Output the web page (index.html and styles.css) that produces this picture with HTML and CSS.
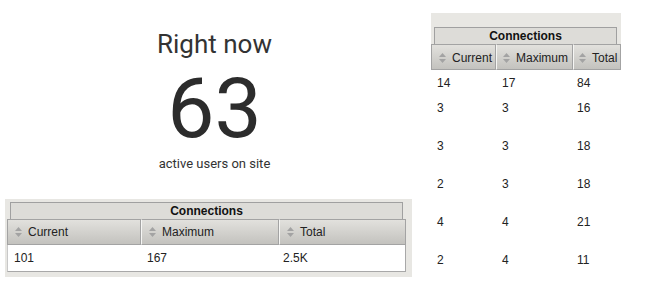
FILE: index.html
```html
<!DOCTYPE html>
<html lang="en">
  <head>
    <meta charset="utf-8" />
    <title>Realtime</title>
    <link rel="stylesheet" href="styles.css">
  </head>
  <body>
    <div class="page">
      <div class="main">
        <div class="now">
          <div class="now-title">Right now</div>
          <div class="now-count">63</div>
          <div class="now-label">active users on site</div>
        </div>
        <div class="conn-box">
          <table class="conn conn-wide">
            <caption><div class="conn-title">Connections</div></caption>
            <thead>
              <tr>
                <th><span class="sort"><svg width="7" height="10" viewBox="0 0 7 10"><path d="M0 4 3.5 0 7 4z M0 6 3.5 10 7 6z" /></svg></span>Current</th>
                <th><span class="sort"><svg width="7" height="10" viewBox="0 0 7 10"><path d="M0 4 3.5 0 7 4z M0 6 3.5 10 7 6z" /></svg></span>Maximum</th>
                <th><span class="sort"><svg width="7" height="10" viewBox="0 0 7 10"><path d="M0 4 3.5 0 7 4z M0 6 3.5 10 7 6z" /></svg></span>Total</th>
              </tr>
            </thead>
            <tbody>
              <tr><td>101</td><td>167</td><td>2.5K</td></tr>
            </tbody>
          </table>
        </div>
      </div>
      <div class="side">
        <table class="conn conn-side">
          <caption><div class="conn-title">Connections</div></caption>
          <thead>
            <tr>
              <th><span class="sort"><svg width="7" height="10" viewBox="0 0 7 10"><path d="M0 4 3.5 0 7 4z M0 6 3.5 10 7 6z" /></svg></span>Current</th>
              <th><span class="sort"><svg width="7" height="10" viewBox="0 0 7 10"><path d="M0 4 3.5 0 7 4z M0 6 3.5 10 7 6z" /></svg></span>Maximum</th>
              <th><span class="sort"><svg width="7" height="10" viewBox="0 0 7 10"><path d="M0 4 3.5 0 7 4z M0 6 3.5 10 7 6z" /></svg></span>Total</th>
            </tr>
          </thead>
          <tbody>
            <tr class="first"><td>14</td><td>17</td><td>84</td></tr>
            <tr><td>3</td><td>3</td><td>16</td></tr>
            <tr><td>3</td><td>3</td><td>18</td></tr>
            <tr><td>2</td><td>3</td><td>18</td></tr>
            <tr><td>4</td><td>4</td><td>21</td></tr>
            <tr><td>2</td><td>4</td><td>11</td></tr>
          </tbody>
        </table>
      </div>
    </div>
  </body>
</html>
```

FILE: styles.css
```css
html,
body {
  margin: 0;
  background: #fff;
}

.page {
  display: flex;
  gap: 2px;
}

/* big counter on the left */
.main {
  width: 429px;
  display: flex;
  flex-direction: column;
}

.now {
  padding-top: 29px;
  text-align: center;
  font-family: Roboto, "Noto Sans", sans-serif;
  color: #333;
}
.now-title {
  font-size: 26px;
  line-height: 30px;
}
.now-count {
  margin-top: 8px;
  font-size: 84px;
  line-height: 84px;
  color: #2c2c2c;
}
.now-label {
  margin-top: 5px;
  font-size: 13px;
  line-height: 16px;
}

/* connection tables */
.conn-box {
  align-self: flex-start;
  margin: 27px 0 0 5px;
  padding: 3px 6px 5px 2px;
  background: #e8e7e3;
}

.conn {
  border-collapse: separate;
  border-spacing: 0;
  font-family: "Liberation Sans", Arial, sans-serif;
  font-size: 12px;
  line-height: 14px;
  color: #222;
}

.conn caption {
  text-align: center;
}

.conn-title {
  margin: 0 3px;
  height: 16px;
  line-height: 16px;
  border: 1px solid #a0a0a0;
  border-bottom: none;
  background: #dddcd8;
  font-weight: bold;
  color: #111;
}

.conn th {
  box-sizing: border-box;
  padding: 5px 0 5px 7px;
  border: 1px solid #a3a3a3;
  border-left-color: #f6f6f4;
  background: linear-gradient(#e2e1dd, #c3c2be);
  font-weight: normal;
  text-align: left;
  white-space: nowrap;
}
.conn th:first-child {
  border-left-color: #a3a3a3;
}

.sort {
  display: inline-block;
  margin-right: 6px;
  vertical-align: -1px;
}
.sort svg {
  display: block;
  fill: #a3a3a3;
}

.conn td {
  padding: 6px 4px 6px 6px;
  text-align: left;
}
.conn td:last-child {
  padding-left: 4px;
}

.conn-wide th:nth-child(1) {
  width: 134px;
}
.conn-wide th:nth-child(2) {
  width: 138px;
}
.conn-wide th:nth-child(3) {
  width: 127px;
}
.conn-wide td {
  background: #fff;
  border-bottom: 1px solid #a8a8a8;
}
.conn-wide td:first-child {
  border-left: 1px solid #c8c8c8;
}
.conn-wide td:last-child {
  border-right: 1px solid #a8a8a8;
}

/* narrow table on the right */
.side {
  width: 225px;
  padding-top: 13px;
}
.conn-side caption {
  padding-top: 14px;
  background: #e8e7e3;
}
.conn-side .conn-title {
  margin: 0 4px 0 3px;
}
.conn-side th {
  padding-top: 6px;
  padding-bottom: 4px;
}
.conn-side th:nth-child(1) {
  width: 65px;
}
.conn-side th:nth-child(2) {
  width: 77px;
  padding-left: 6px;
}
.conn-side th:nth-child(3) {
  width: 48px;
  padding-left: 5px;
}
.conn-side tbody tr {
  height: 38px;
}
.conn-side td {
  vertical-align: top;
}
.conn-side tr.first {
  height: 25px;
}
.conn-side tr.first td {
  padding-bottom: 5px;
}
```
